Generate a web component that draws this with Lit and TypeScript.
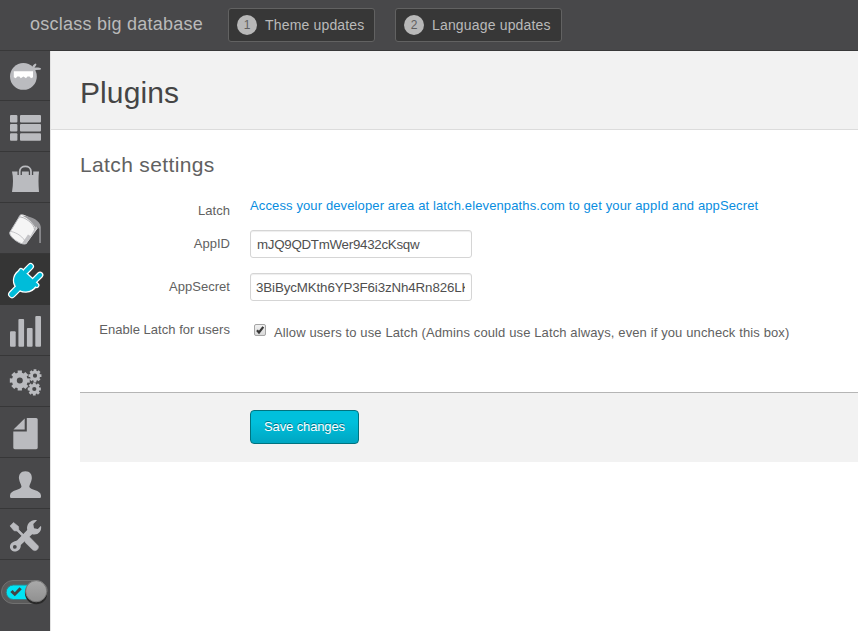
import { LitElement, html, css, svg } from "lit";
import { customElement } from "lit/decorators.js";
import { classMap } from "lit/directives/class-map.js";

const gear = (cx: number, cy: number, r: number, n: number, hole: number) => {
  const pts: string[] = [];
  const step = (Math.PI * 2) / n;
  for (let i = 0; i < n; i++) {
    const a = i * step;
    for (const [k, q] of [[-0.34, 0.78], [-0.27, 1], [0.27, 1], [0.34, 0.78]]) {
      pts.push(`${(cx + Math.cos(a + k * step) * r * q).toFixed(2)} ${(cy + Math.sin(a + k * step) * r * q).toFixed(2)}`);
    }
  }
  return svg`<path fill-rule="evenodd" d="M${pts.join("L")}ZM${cx - hole} ${cy}a${hole} ${hole} 0 1 0 ${2 * hole} 0a${hole} ${hole} 0 1 0 ${-2 * hole} 0Z"/>`;
};

// Every glyph is drawn in a 50 x 50 cell.
const items = [
  { name: "dashboard", icon: svg`
    <circle cx="23.4" cy="25.4" r="13.4"/>
    <path d="M31.5 17.5C32.5 14.5 34 13 36 12.6L36.4 13.8L34.5 16.8C37 16.2 39.5 16.6 41 17.3L40.5 18.8L36 19L33.5 20Z"/>
    <path d="M13.8 20.3H33V26.3L31 27.2L29.5 25.5H27.5L26 27.2L23.4 25.5L20.8 27.2L19.3 25.5H17.3L15.8 27.2L13.8 26.3Z" fill="#fff"/>` },
  { name: "listings", icon: svg`${[14, 23, 32.3].map(y => svg`
    <rect x="10" y=${y} width="7.4" height="7.4" rx="1"/><rect x="20" y=${y} width="21" height="7.4" rx="1"/>`)}` },
  { name: "market", icon: svg`
    <path d="M12 19.5H39Q38 28 39 40H12Q14 28 12 19.5Z"/>
    <path d="M19.7 23V19C19.7 12.8 31 12.8 31 19V23" fill="none" stroke="#48484a" stroke-width="4.4"/>
    <path d="M19.7 24.5V19.5C19.7 12.6 31 12.6 31 19.5V24.5" fill="none" stroke="#babbbf" stroke-width="1.8"/>
    <circle cx="19.7" cy="24.7" r="1.5"/><circle cx="31" cy="24.7" r="1.5"/>` },
  { name: "appearance", icon: svg`
    <path d="M20.5 11.7C25 10.5 37.5 18.5 37.5 25.5L26.5 40.5C22.5 43.5 9 34.5 9.7 29.5Z" fill="#f5f5f5"/>
    <path d="M22 12.5C28 12.5 35 17 37.5 22L36 25.5Q30 16 22 12.5Z" fill="#9b9b9e"/>
    <path d="M37 25.5L26.5 40.5L21.5 41L28 31.5L30.5 33L35.5 24Z" fill="#c3c3c6"/>
    <path d="M18.5 14C24 13 34.5 21 34.5 26.5" fill="none" stroke="#a5a5a8" stroke-width=".8"/>
    <path d="M11 28.5C17 29.5 24 34.5 25.5 39.5" fill="none" stroke="#b8b8bb" stroke-width=".8"/>
    <path d="M20.5 11.7L9.7 29.5C9 34.5 22.5 43.5 26.5 40.5" fill="none" stroke="#babbbf"/>
    <path d="M24 13C32 13 40.3 18 40.8 24V40H39.3V26L36.5 23C34 19 29 15.5 24 13Z" fill="#97979a"/>` },
  { name: "plugins", active: true, icon: svg`
    ${[{ c: "#fff", w: 2.4 }, { c: "#00bcd9", w: 0 }].map(l => svg`
      <g fill=${l.c} stroke=${l.c} stroke-linecap="round" stroke-linejoin="round">
        <path d="M21 16.5C14.5 19.5 12.8 27 16.5 32.5C21 38.8 31 38.8 36 31Z" stroke-width=${1 + l.w}/>
        <path d="M25.6 17.5L30.6 12.4M34.3 26.7L40 21" stroke-width=${4.4 + l.w} fill="none"/>
        <path d="M21 16.5L36.8 31.3" stroke-width=${3 + l.w} fill="none"/>
        <path d="M18.2 34L12 40.3" stroke-width=${5.4 + l.w} fill="none"/>
      </g>`)}` },
  { name: "statistics", icon: svg`
    <rect x="10" y="26.3" width="5.7" height="15.5" rx="1"/><rect x="18.4" y="14" width="5.7" height="27.8" rx="1"/>
    <rect x="26.9" y="23" width="5.7" height="18.8" rx="1"/><rect x="35.3" y="11" width="5.7" height="30.8" rx="1"/>` },
  { name: "settings", icon: svg`${gear(19.8, 24.5, 10.2, 8, 3)}${gear(35, 19.7, 6.6, 8, 2.1)}${gear(34.3, 33, 6.7, 8, 2.1)}` },
  { name: "pages", icon: svg`
    <path d="M26.8 11H36.2Q37.7 11 37.7 12.5V40.8Q37.7 42.2 36.2 42.2H14.8Q13.3 42.2 13.3 40.8V24.5H26.8Z"/>
    <path d="M24.7 11.4V22.5H13.5Z"/>` },
  { name: "users", icon: svg`
    <path d="M25.4 13.3C30 13.3 32.3 16.8 31.8 20.8C31.3 24.8 29.5 26.3 29.3 28.8C29.8 32.2 40.8 31.8 41 37.5V38.8Q41 40 39.8 40H11.2Q10 40 10 38.8V37.5C10.2 31.8 21 32.2 21.5 28.8C21.3 26.3 19.5 24.8 19 20.8C18.5 16.8 20.8 13.3 25.4 13.3Z"/>` },
  { name: "tools", icon: svg`
    <path d="M10 16.9L13.5 13.5L18.5 17.5L18.8 20.8L25 27L29.5 28L38.3 37Q39 39.3 36.8 41Q34.3 42.3 32.7 40.8L25.3 33.5L24.2 29.3L17 22L14 21.7Z" stroke="#babbbf" stroke-width=".6"/>
    <path fill-rule="evenodd" d="M37 11.2L33.3 15.1L34 19.2L37.8 20L41 16.8C42.2 22.7 37.5 26.7 32.2 25.3L20.8 36C21 40.5 17.5 43 14 42.5C9.5 41.5 8.8 36.5 11.6 34C13 32.7 15.2 32 17 31.4L27.2 21C26 14.5 31.5 10 37 11.2ZM14.8 36A1.9 1.9 0 1 0 14.9 39.8A1.9 1.9 0 1 0 14.8 36Z"/>` },
];

@customElement("app-root")
export class AppRoot extends LitElement {
  static styles = css`
    :host { display: flex; flex-direction: column; height: 631px; width: 858px; overflow: hidden; background: #fff;
      font-family: "Liberation Sans", Arial, sans-serif; font-size: 13px; color: #616161; }
    * { box-sizing: border-box; }
    .top { height: 51px; flex: none; display: flex; background: #48484a; border-bottom: 1px solid #383839; padding-left: 30px; color: #bababa; }
    .site { width: 198px; line-height: 48px; font-size: 18px; letter-spacing: .24px; white-space: nowrap; }
    .update { height: 34px; margin: 8px 20px 0 0; display: flex; align-items: center; padding-left: 8px; background: #373737;
      border: 1px solid #626262; border-radius: 3px; font-size: 14px; letter-spacing: .17px; white-space: nowrap; }
    .theme { width: 147px; } .language { width: 167px; }
    .count { width: 20px; height: 20px; border-radius: 50%; background: #b8b8b8; color: #606060; font-size: 12px; line-height: 20px; text-align: center; margin-right: 8px; letter-spacing: 0; }
    .body { flex: 1; display: flex; min-height: 0; }
    .side { width: 50px; flex: none; background: #48484a; }
    .item { height: 51px; border-bottom: 1px solid #373738; }
    .item:first-child { height: 50px; }
    .item.active { background: #353535; border-color: #353535; }
    .item svg { display: block; fill: #babbbf; }
    .item:first-child svg { height: 49px; }
    .toggle { display: block; margin-top: 17px; }
    .main { flex: 1; min-width: 0; border-left: 1px solid #e2e2e2; }
    .title { margin: 0; height: 79px; padding-left: 29px; background: #f2f2f2; border-bottom: 1px solid #dcdcdc; color: #454545;
      font-size: 30px; font-weight: 400; line-height: 84px; letter-spacing: .1px; }
    .content { padding-left: 29px; }
    h2 { margin: 0; padding-top: 19px; height: 65px; font-size: 21px; line-height: 32px; font-weight: 400; letter-spacing: .36px; }
    .row { display: flex; white-space: nowrap; }
    .label { width: 150px; margin-right: 20px; text-align: right; line-height: 16px; padding-top: 6px; letter-spacing: .03px; }
    .r1 { height: 35px; } .r2, .r3 { height: 43px; } .r4 { height: 76px; }
    .r1 .label { padding-top: 8px; }
    a { color: #088de0; text-decoration: none; line-height: 16px; padding-top: 3px; letter-spacing: .125px; }
    input[type="text"] { width: 222px; height: 28px; border: 1px solid #d5d5d5; border-radius: 3px; padding: 0 6px; outline: 0; background: #fff;
      box-shadow: inset 0 1px 1px #eee; color: #4f4f4f; font: 13.333px "Liberation Sans", Arial, sans-serif; letter-spacing: -.28px; }
    input.secret { letter-spacing: -.12px; padding-left: 5px; }
    .check { width: 12px; height: 12px; margin: 8px 8px 0 4px; }
    .allow { line-height: 16px; padding-top: 9px; letter-spacing: .12px; }
    .actions { height: 70px; border-top: 1px solid #b5b5b5; background: #f2f2f2; padding: 17px 0 0 170px; }
    button { display: block; width: 109px; height: 34px; border: 1px solid #00737f; border-radius: 4px; padding: 0 0 2px; color: #fff;
      background: linear-gradient(#00c0dc 35%, #00a6c2); font: 13px "Liberation Sans", Arial, sans-serif; letter-spacing: -.12px; text-shadow: 0 -1px 0 #00758a; }
  `;

  render() {
    return html`
      <header class="top">
        <div class="site">osclass big database</div>
        <div class="update theme"><span class="count">1</span><span>Theme updates</span></div>
        <div class="update language"><span class="count">2</span><span>Language updates</span></div>
      </header>
      <div class="body">
        <nav class="side">
          ${items.map(i => html`<div class=${classMap({ item: true, active: !!i.active })} aria-label=${i.name}>
            <svg width="50" height="50" viewBox=${i.name === "dashboard" ? "0 0 50 49" : "0 0 50 50"}>${i.icon}</svg></div>`)}
          <svg class="toggle" width="50" height="30" viewBox="0 0 50 30">
            <defs><linearGradient id="knob" x2="0" y2="1"><stop stop-color="#aaa"/><stop offset="1" stop-color="#909090"/></linearGradient></defs>
            <rect x="1.5" y="3.5" width="46" height="23" rx="11.5" fill="#5b5b5b" stroke="#707070"/>
            <rect x="6.2" y="8" width="35" height="14.5" rx="7.2" fill="#00e4f5" stroke="#348087"/>
            <path d="M10.3 15L12.6 12.9L14.8 15.2L19.5 10.3L21.8 12.3L14.8 19.3Z" fill="#444"/>
            <circle cx="36.2" cy="16" r="11.3" fill="#292929"/>
            <circle cx="36.2" cy="14.2" r="10.6" fill="url(#knob)" stroke="#777"/>
          </svg>
        </nav>
        <main class="main">
          <h1 class="title">Plugins</h1>
          <div class="content">
            <h2>Latch settings</h2>
            <div class="row r1"><div class="label">Latch</div><a>Access your developer area at latch.elevenpaths.com to get your appId and appSecret</a></div>
            <div class="row r2"><div class="label">AppID</div><input class="id" type="text" .value=${"mJQ9QDTmWer9432cKsqw"}></div>
            <div class="row r3"><div class="label">AppSecret</div><input class="secret" type="text" .value=${"3BiBycMKth6YP3F6i3zNh4Rn826LK"}></div>
            <div class="row r4"><div class="label">Enable Latch for users</div>
              <svg class="check" viewBox="0 0 12 12"><defs><linearGradient id="box" x2="0" y2="1"><stop stop-color="#f2f2f2"/><stop offset="1" stop-color="#d8d8d8"/></linearGradient></defs>
                <rect x=".5" y=".5" width="11" height="11" rx="1.5" fill="url(#box)" stroke="#a5a5a5"/>
                <path d="M3 6.2L5 8.5L9.3 2.8" fill="none" stroke="#383838" stroke-width="2.2"/></svg>
              <div class="allow">Allow users to use Latch (Admins could use Latch always, even if you uncheck this box)</div></div>
            <div class="actions"><button>Save changes</button></div>
          </div>
        </main>
      </div>`;
  }
}
